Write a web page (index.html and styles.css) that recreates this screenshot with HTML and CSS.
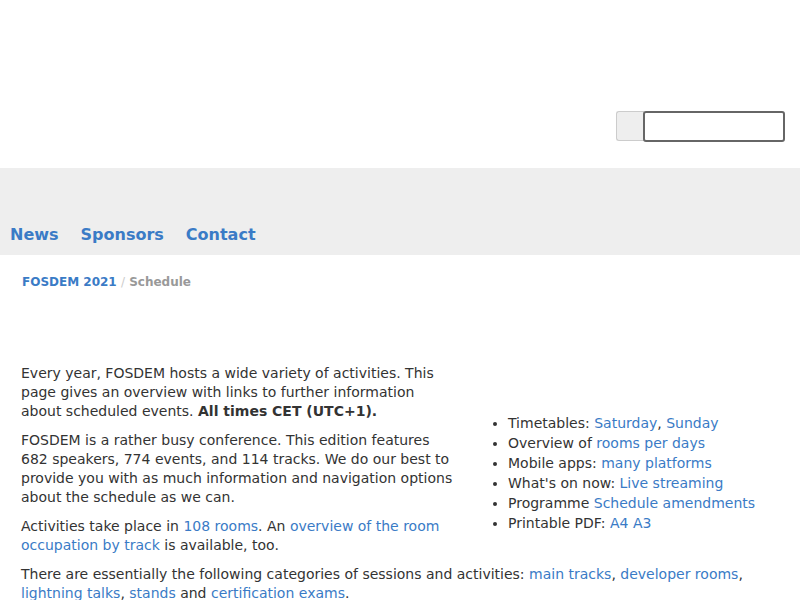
FILE: index.html
```html
<!DOCTYPE html>
<html>
<head>
<meta charset="utf-8">
<link rel="stylesheet" href="styles.css">
</head>
<body>
<header class="header">
  <form class="search">
    <button type="button" class="search-btn"></button>
    <input class="search-input" type="text">
  </form>
</header>
<nav class="nav">
  <a href="#">News</a>
  <a href="#">Sponsors</a>
  <a href="#">Contact</a>
</nav>
<main class="main">
  <div class="crumbs"><a href="#">FOSDEM 2021</a> <span class="sep">/</span> <span class="cur">Schedule</span></div>
  <div class="row">
    <div class="col-left">
      <p>Every year, FOSDEM hosts a wide variety of activities. This page gives an overview with links to further information about scheduled events. <b>All times CET (UTC+1).</b></p>
      <p>FOSDEM is a rather busy conference. This edition features 682 speakers, 774 events, and 114 tracks. We do our best to provide you with as much information and navigation options about the schedule as we can.</p>
      <p>Activities take place in <a href="#">108 rooms</a>. An <a href="#">overview of the room occupation by track</a> is available, too.</p>
    </div>
    <div class="col-right">
      <ul class="links">
        <li>Timetables: <a href="#">Saturday</a>, <a href="#">Sunday</a></li>
        <li>Overview of <a href="#">rooms per days</a></li>
        <li>Mobile apps: <a href="#">many platforms</a></li>
        <li>What's on now: <a href="#">Live streaming</a></li>
        <li>Programme <a href="#">Schedule amendments</a></li>
        <li>Printable PDF: <a href="#">A4</a> <a href="#">A3</a></li>
      </ul>
    </div>
  </div>
  <p>There are essentially the following categories of sessions and activities: <a href="#">main tracks</a>, <a href="#">developer rooms</a>, <a href="#">lightning talks</a>, <a href="#">stands</a> and <a href="#">certification exams</a>.</p>
</main>
</body>
</html>
```
FILE: styles.css
```css
html, body { margin: 0; padding: 0; }
body {
  font-family: "DejaVu Sans", sans-serif;
  font-size: 14px;
  line-height: 19px;
  color: #333;
  background: #fff;
}
a { color: #3a7bc6; text-decoration: none; }
p { margin: 0 0 10px; }

.header {
  height: 168px;
  display: flex;
  justify-content: flex-end;
  align-items: flex-start;
  box-sizing: border-box;
  padding: 111px 15px 0 0;
}
.search { display: flex; margin: 0; }
.search-btn {
  width: 28px;
  height: 30px;
  background: #eee;
  border: 1px solid #ccc;
  border-right: none;
  border-radius: 3px 0 0 3px;
  padding: 0;
}
.search-input {
  width: 142px;
  height: 31px;
  box-sizing: border-box;
  border: 2px solid #666;
  border-radius: 3px;
  padding: 0 6px;
  margin: 0 0 0 -1px;
  font: inherit;
}

.nav {
  background: #eee;
  height: 87px;
  box-sizing: border-box;
  padding: 56px 0 0 0;
  display: flex;
}
.nav a {
  font-weight: bold;
  font-size: 16px;
  line-height: 22px;
  padding: 0 11px 0 10px;
  margin-right: 1px;
}

.main { padding: 0 21px; }
.crumbs {
  font-size: 12px;
  font-weight: bold;
  line-height: 16px;
  padding: 19px 0 0 1px;
  height: 109px;
  box-sizing: border-box;
}
.crumbs .sep { color: #ccc; font-weight: normal; }
.crumbs .cur { color: #999; }

.row { display: flex; }
.col-left { width: 436px; flex: none; }
.col-right { flex: 1; padding-left: 32px; padding-top: 49px; }
.links {
  margin: 0;
  padding-left: 19px;
  line-height: 20px;
}
.links li { margin: 0; }
```
